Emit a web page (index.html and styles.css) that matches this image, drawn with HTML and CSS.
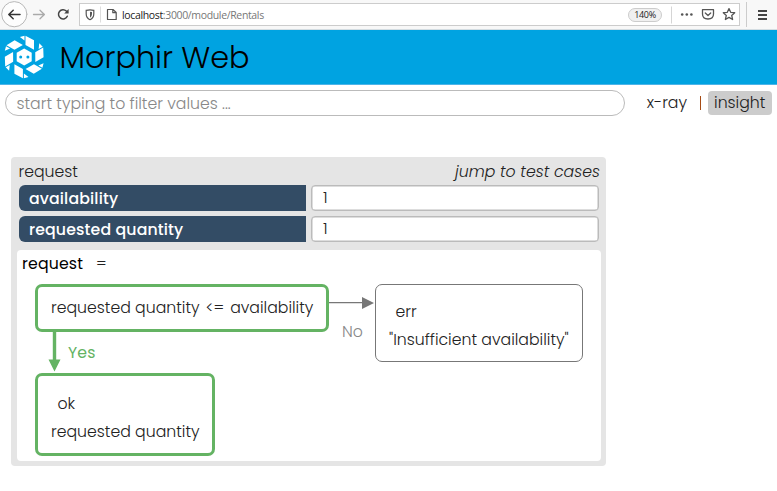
FILE: index.html
```html
<!DOCTYPE html>
<html lang="en">
<head>
<meta charset="utf-8">
<title>Morphir Web</title>
<link rel="stylesheet" href="styles.css">
</head>
<body>
<div class="browser">
  <svg class="nav" width="78" height="29" viewBox="0 0 78 29" fill="none" stroke-linecap="round" stroke-linejoin="round">
    <circle cx="14.3" cy="14.2" r="12.6" fill="#fdfdfd" stroke="#b8b8b8"/>
    <path d="M20 14.500H9M13.200 10.200 8.800 14.500l4.400 4.300" stroke="#333" stroke-width="1.500"/>
    <path d="M33.500 14.500h10.700M40 10.200l4.400 4.300-4.400 4.300" stroke="#aaa" stroke-width="1.300"/>
    <path d="M67.300 16.200a4.600 4.600 0 1 1-1-5.200l1.200 1.200" stroke="#444" stroke-width="1.500"/>
    <path d="M68.600 9v4.400h-4.400z" fill="#444"/>
  </svg>
  <div class="address">
    <svg width="42" height="22" viewBox="0 0 42 22" fill="none" stroke="#555" stroke-width="1.200">
      <path d="M6.200 6.300q3.800-1 7.600 0v3.700q0 4-3.800 5.700-3.800-1.700-3.800-5.700z"/>
      <path d="M10 7.700v6q2-1.200 2-3.700V8z" fill="#555" stroke="none"/>
      <path d="M20.500 2.500v16" stroke="#ddd" stroke-width="1"/>
      <path d="M27.500 5.500h5.500l3.200 3V15.500h-8.700zM32.800 5.500v3.200h3.400" stroke-linejoin="round"/>
    </svg>
    <span class="url"><b>localhost</b>:3000/module/Rentals</span>
    <span class="zoom">140%</span>
    <svg class="actions" width="69" height="22" viewBox="0 0 69 22" fill="none" stroke="#555" stroke-width="1.300">
      <path d="M1.500 2.500v17" stroke="#d5d5d5" stroke-width="1"/>
      <g fill="#555" stroke="none"><circle cx="12.200" cy="10.500" r="1.300"/><circle cx="16.800" cy="10.500" r="1.300"/><circle cx="21.400" cy="10.500" r="1.300"/></g>
      <path d="M32.500 5.700h11v4.300q0 5-5.500 5t-5.500-5zM35.300 9 38 11.500 40.700 9" stroke-linejoin="round" stroke-linecap="round"/>
      <path d="m59 4.600 1.700 3.700 4 .4-3 2.700.9 4.100L59 13.400l-3.600 2.100.9-4.100-3-2.700 4-.4z" stroke-linejoin="round"/>
    </svg>
  </div>
  <div class="menu"><i></i><i></i><i></i></div>
</div>
<header class="header">
  <svg class="logo" width="40" height="44" viewBox="0 0 40 44" fill="#fff">
    <defs><path id="arm" d="M1.300-21.200 9.800-16.700v9.500L1.300-12zM.3-21.200v4.700L-4.300-19.900z"/></defs>
    <g transform="translate(20.200 22)">
      <path d="M0-8.600 7.500-4.300v8.600L0 8.600-7.500 4.300v-8.600z"/>
      <use href="#arm"/><use href="#arm" transform="rotate(60)"/><use href="#arm" transform="rotate(120)"/>
      <use href="#arm" transform="rotate(180)"/><use href="#arm" transform="rotate(240)"/><use href="#arm" transform="rotate(300)"/>
      <circle cx="-3.500" r="1.500" fill="#00a3e1"/><circle cx="3.700" r="1.500" fill="#00a3e1"/>
    </g>
  </svg>
  <h1 class="title">Morphir Web</h1>
</header>
<div class="toolbar">
  <div class="search">start typing to filter values ...</div>
  <span class="mode">x-ray</span><span class="divider"></span><span class="mode selected">insight</span>
</div>
<main class="panel">
  <div class="panel-head"><span class="name">request</span><em class="jump">jump to test cases</em></div>
  <div class="field"><span class="label">availability</span><span class="value">1</span></div>
  <div class="field"><span class="label">requested quantity</span><span class="value">1</span></div>
  <section class="insight">
    <div class="definition"><span class="def-name">request</span><span class="equals">=</span></div>
    <div class="flow">
      <div class="branch">
        <div class="node condition"><span>requested quantity</span><span class="op">&lt;=</span><span>availability</span></div>
        <div class="yes">
          <svg width="13" height="40" viewBox="0 0 13 40" fill="#64b363"><path d="M4.800 0h3.400v27.500h4.300L6.500 39.500.500 27.500h4.300z"/></svg>
          <span class="yes-text">Yes</span>
        </div>
        <div class="node ok"><span class="tag">ok</span><span>requested quantity</span></div>
      </div>
      <div class="no">
        <svg width="46" height="12" viewBox="0 0 46 12" fill="#777"><path d="M0 4.900h33V0l12 6-12 6V6.200H0z"/></svg>
        <span class="no-text">No</span>
      </div>
      <div class="node err"><span class="tag">err</span><span>"Insufficient availability"</span></div>
    </div>
  </section>
</main>
</body>
</html>
```
FILE: styles.css
```css
* { box-sizing: border-box; }
body { margin: 0; width: 777px; height: 491px; overflow: hidden; background: #fff; color: #222; font: 300 15.720px/24px Poppins, Inter, "Open Sans", sans-serif; white-space: nowrap; }
svg { display: block; flex: none; }
.browser { display: flex; height: 30px; background: #f8f8f8; border-bottom: 1px solid #d4dde2; }
.address { display: flex; align-items: center; width: 661px; height: 23px; margin: 3px 0 0 1px; background: #fff; border: 1px solid #ccc; }
.url { margin-left: 0; font: 10.500px/20px "Open Sans", sans-serif; letter-spacing: -.35px; color: #777; }
.url b { font-weight: 400; color: #222; }
.zoom { margin-left: auto; margin-right: 8px; width: 34px; height: 14px; border: 1px solid #ccc; border-radius: 7px; background: #f0f0f0; font: 9px/12px "Open Sans", sans-serif; text-align: center; letter-spacing: -.3px; }
.menu { display: flex; flex-direction: column; gap: 2.500px; margin: 2px 0 0 6px; padding: 8px 0 0 11px; height: 25px; border-left: 1px solid #ccc; }
.menu i { width: 9px; height: 1.500px; background: #444; }
.header { display: flex; height: 55px; padding: 5px 0 0 4px; background: #00a3e1; border-bottom: 1px solid #4db4e8; }
.title { margin: 0 0 0 15.500px; font-size: 30.300px; font-weight: 300; line-height: 45px; color: #000; }
.toolbar { display: flex; align-items: center; height: 36px; padding: 0 5px; }
.search { width: 620px; height: 26px; padding-left: 10.500px; border: 1px solid #bbb; border-radius: 13px; color: #888; line-height: 26px; }
.mode { margin-left: 22px; }
.divider { width: 1px; height: 14px; margin-left: 13px; background: #a64b14; }
.selected { width: 64px; margin-left: 7px; padding-left: 6px; background: #ccc; border-radius: 4px; }
.panel { width: 595px; height: 309px; margin: 36px 0 0 11px; padding: 3px 5px 5px; background: #e5e5e5; border-radius: 4px; }
.panel-head { display: flex; justify-content: space-between; height: 25px; padding: 0 1px 0 2.500px; }
.field { display: flex; gap: 5px; height: 26px; margin: 0 2px 5px 3px; }
.label { width: 287px; padding-left: 10px; background: #334c65; border-radius: 6px 0 0 6px; color: #fff; font-weight: 500; line-height: 27px; letter-spacing: .15px; }
.value { width: 288px; padding-left: 11px; background: #fff; border: 1px solid #bbb; border-radius: 4px; box-shadow: inset 0 0 0 .5px #bbb; line-height: 24px; }
.insight { width: 584px; height: 211px; margin: 8px 0 0 1px; padding: 2px 0 0 5px; background: #fff; border-radius: 4px; }
.definition { display: flex; gap: 13px; height: 32px; }
.def-name { font-weight: 400; color: #000; letter-spacing: .15px; }
.flow { display: flex; align-items: flex-start; padding-left: 13px; }
.branch { width: 294px; }
.node { border: 3px solid #64b363; border-radius: 7px; }
.condition { display: flex; height: 48px; padding: 9px 0 0 13px; }
.op { margin: 0 6px; }
.yes { display: flex; height: 41px; padding-left: 13px; color: #64b363; }
.yes-text { margin: 9px 0 0 7px; font-weight: 400; letter-spacing: .15px; }
.ok { display: flex; flex-direction: column; align-items: flex-start; width: 180px; height: 83px; padding: 14px 0 0 13px; line-height: 28px; }
.tag { margin-left: 6.500px; }
.no { width: 46px; padding-top: 13px; color: #888; }
.no-text { display: block; width: max-content; margin: 11px 0 0 13px; }
.err { display: flex; flex-direction: column; align-items: flex-start; width: 208px; height: 78px; padding: 13px 0 0 13px; border: 1.500px solid #777; line-height: 28px; }
```
